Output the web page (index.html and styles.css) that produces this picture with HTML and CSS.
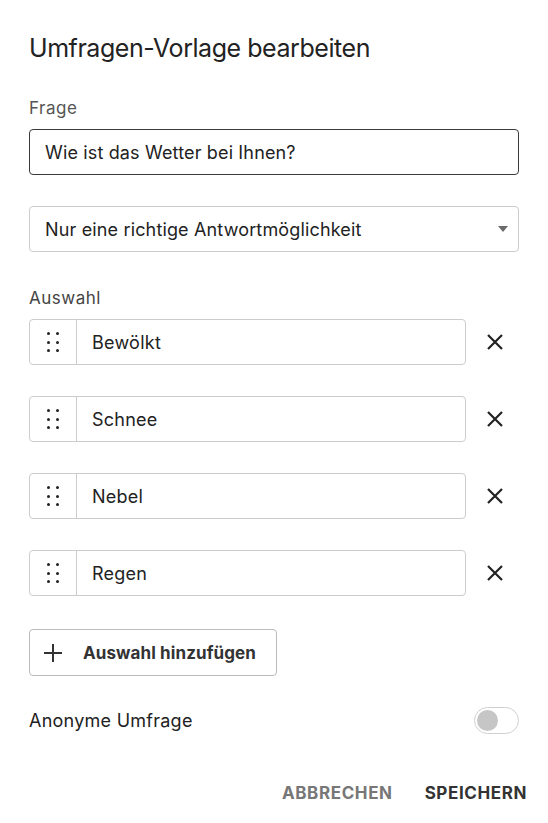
FILE: index.html
```html
<!DOCTYPE html>
<html lang="de">
<head>
<meta charset="utf-8">
<title>Umfragen-Vorlage bearbeiten</title>
<link rel="stylesheet" href="styles.css">
</head>
<body>
<div class="dialog">
  <h1 class="title">Umfragen-Vorlage bearbeiten</h1>

  <label class="label label-frage">Frage</label>
  <div class="field field-dark">Wie ist das Wetter bei Ihnen?</div>

  <div class="field select">
    <span>Nur eine richtige Antwortmöglichkeit</span>
    <span class="caret"></span>
  </div>

  <div class="label label-auswahl">Auswahl</div>

  <div class="choices">
    <div class="choice">
      <div class="choice-field">
        <div class="handle"><span></span><span></span><span></span><span></span><span></span><span></span></div>
        <div class="choice-text">Bewölkt</div>
      </div>
      <button class="remove" aria-label="Entfernen"><svg viewBox="0 0 18 18" width="18" height="18"><path d="M2 2L16 16M16 2L2 16" stroke="#222" stroke-width="2.2" fill="none"/></svg></button>
    </div>
    <div class="choice">
      <div class="choice-field">
        <div class="handle"><span></span><span></span><span></span><span></span><span></span><span></span></div>
        <div class="choice-text">Schnee</div>
      </div>
      <button class="remove" aria-label="Entfernen"><svg viewBox="0 0 18 18" width="18" height="18"><path d="M2 2L16 16M16 2L2 16" stroke="#222" stroke-width="2.2" fill="none"/></svg></button>
    </div>
    <div class="choice">
      <div class="choice-field">
        <div class="handle"><span></span><span></span><span></span><span></span><span></span><span></span></div>
        <div class="choice-text">Nebel</div>
      </div>
      <button class="remove" aria-label="Entfernen"><svg viewBox="0 0 18 18" width="18" height="18"><path d="M2 2L16 16M16 2L2 16" stroke="#222" stroke-width="2.2" fill="none"/></svg></button>
    </div>
    <div class="choice">
      <div class="choice-field">
        <div class="handle"><span></span><span></span><span></span><span></span><span></span><span></span></div>
        <div class="choice-text">Regen</div>
      </div>
      <button class="remove" aria-label="Entfernen"><svg viewBox="0 0 18 18" width="18" height="18"><path d="M2 2L16 16M16 2L2 16" stroke="#222" stroke-width="2.2" fill="none"/></svg></button>
    </div>
  </div>

  <button class="add-btn">
    <svg viewBox="0 0 20 20" width="20" height="20"><path d="M10 1V19M1 10H19" stroke="#333" stroke-width="2" fill="none"/></svg>
    <span>Auswahl hinzufügen</span>
  </button>

  <div class="anon-row">
    <span class="anon-label">Anonyme Umfrage</span>
    <span class="toggle"><span class="knob"></span></span>
  </div>

  <div class="actions">
    <button class="action cancel">ABBRECHEN</button>
    <button class="action save">SPEICHERN</button>
  </div>
</div>
</body>
</html>
```

FILE: styles.css
```css
* { box-sizing: border-box; }

html, body {
  margin: 0;
  padding: 0;
  background: #fff;
}

body {
  font-family: Inter, "Noto Sans", "Liberation Sans", sans-serif;
  color: #222;
}

.dialog {
  width: 548px;
  padding: 32px 29px 0 29px;
  display: flex;
  flex-direction: column;
}

.title {
  margin: 0;
  font-size: 25px;
  line-height: 32px;
  font-weight: 400;
  letter-spacing: -0.45px;
  color: #222;
}

.label {
  display: block;
  font-size: 17px;
  line-height: 20px;
  letter-spacing: 0.5px;
  color: #555;
}

.label-frage {
  margin-top: 34px;
}

.field {
  margin-top: 11px;
  height: 46px;
  border: 1px solid #ccc;
  border-radius: 4px;
  padding: 0 15px;
  display: flex;
  align-items: center;
  font-size: 18px;
  letter-spacing: 0.15px;
  color: #222;
}

.field-dark {
  border-color: #3a3a3a;
}

.select {
  margin-top: 31px;
  justify-content: space-between;
  padding-right: 10px;
}

.caret {
  width: 0;
  height: 0;
  border-left: 5px solid transparent;
  border-right: 5px solid transparent;
  border-top: 6px solid #6b6b6b;
}

.label-auswahl {
  margin-top: 36px;
  color: #444;
}

.choices {
  margin-top: 11px;
  display: flex;
  flex-direction: column;
  gap: 31px;
}

.choice {
  display: flex;
  align-items: center;
}

.choice-field {
  width: 437px;
  height: 46px;
  border: 1px solid #ccc;
  border-radius: 4px;
  display: flex;
  align-items: stretch;
}

.handle {
  width: 47px;
  border-right: 1px solid #ccc;
  display: grid;
  grid-template-columns: 3px 3px;
  grid-template-rows: repeat(3, 3px);
  column-gap: 6px;
  row-gap: 5.5px;
  align-content: center;
  justify-content: center;
}

.handle span {
  width: 3px;
  height: 3px;
  border-radius: 50%;
  background: #222;
}

.choice-text {
  display: flex;
  align-items: center;
  padding-left: 15px;
  font-size: 18px;
  letter-spacing: 0.25px;
  color: #222;
}

.remove {
  margin-left: 19px;
  width: 20px;
  height: 20px;
  padding: 0;
  border: 0;
  background: none;
  display: flex;
  align-items: center;
  justify-content: center;
}

.add-btn {
  margin-top: 33px;
  align-self: flex-start;
  width: 248px;
  height: 47px;
  border: 1px solid #bbb;
  border-radius: 4px;
  background: #fff;
  padding: 0 0 0 13px;
  display: flex;
  align-items: center;
  gap: 20px;
  font-family: inherit;
  font-size: 17px;
  font-weight: 700;
  letter-spacing: 0.1px;
  color: #333;
}

.anon-row {
  margin-top: 31px;
  height: 27px;
  display: flex;
  align-items: center;
  justify-content: space-between;
}

.anon-label {
  font-size: 18px;
  letter-spacing: 0.25px;
  color: #222;
}

.toggle {
  width: 45px;
  height: 27px;
  border: 1px solid #cfcfcf;
  border-radius: 14px;
  display: flex;
  align-items: center;
  padding-left: 2px;
}

.knob {
  width: 21px;
  height: 21px;
  border-radius: 50%;
  background: #c6c6c6;
}

.actions {
  margin-top: 49px;
  margin-right: -16px;
  display: flex;
  justify-content: flex-end;
  gap: 16px;
}

.action {
  border: 0;
  background: none;
  padding: 0 8px;
  font-family: inherit;
  font-size: 17px;
  line-height: 20px;
  font-weight: 700;
  letter-spacing: 0.6px;
}

.cancel {
  color: #777;
}

.save {
  color: #333;
}
```
